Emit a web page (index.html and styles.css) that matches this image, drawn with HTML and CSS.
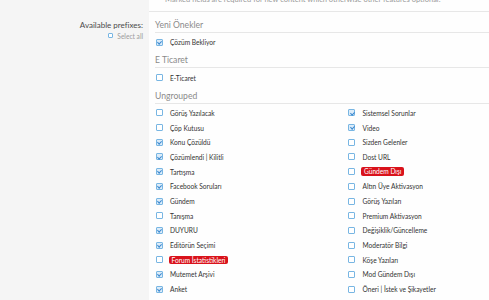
FILE: index.html
```html
<!DOCTYPE html>
<html lang="tr">
<head>
<meta charset="utf-8">
<title>Prefixes</title>
<link rel="stylesheet" href="styles.css">
</head>
<body>
<div class="page">
  <div class="form-row form-row--top">
    <div class="form-label"></div>
    <div class="form-field">
      <p class="hint">* Marked fields are required for new content which otherwise other features optional.</p>
    </div>
  </div>
  <div class="form-row">
    <div class="form-label">
      <div class="label-text">Available prefixes:</div>
      <label class="select-all"><span class="cb cb--small"></span>Select all</label>
    </div>
    <div class="form-field form-field--choices">
      <h3 class="group-head">Yeni Önekler</h3>
      <ul class="choices">
        <li class="choice"><span class="cb is-checked"></span><span class="txt">Çözüm Bekliyor</span></li>
      </ul>
      <h3 class="group-head">E Ticaret</h3>
      <ul class="choices">
        <li class="choice"><span class="cb"></span><span class="txt">E-Ticaret</span></li>
      </ul>
      <h3 class="group-head">Ungrouped</h3>
      <ul class="choices choices--grid">
        <li class="choice"><span class="cb"></span><span class="txt">Görüş Yazılacak</span></li>
        <li class="choice"><span class="cb is-checked"></span><span class="txt">Sistemsel Sorunlar</span></li>
        <li class="choice"><span class="cb"></span><span class="txt">Çöp Kutusu</span></li>
        <li class="choice"><span class="cb is-checked"></span><span class="txt">Video</span></li>
        <li class="choice"><span class="cb is-checked"></span><span class="txt">Konu Çözüldü</span></li>
        <li class="choice"><span class="cb"></span><span class="txt">Sizden Gelenler</span></li>
        <li class="choice"><span class="cb is-checked"></span><span class="txt">Çözümlendi | Kilitli</span></li>
        <li class="choice"><span class="cb"></span><span class="txt">Dost URL</span></li>
        <li class="choice"><span class="cb is-checked"></span><span class="txt">Tartışma</span></li>
        <li class="choice"><span class="cb"></span><span class="tag">Gündem Dışı</span></li>
        <li class="choice"><span class="cb is-checked"></span><span class="txt">Facebook Soruları</span></li>
        <li class="choice"><span class="cb"></span><span class="txt">Altın Üye Aktivasyon</span></li>
        <li class="choice"><span class="cb is-checked"></span><span class="txt">Gündem</span></li>
        <li class="choice"><span class="cb"></span><span class="txt">Görüş Yazıları</span></li>
        <li class="choice"><span class="cb"></span><span class="txt">Tanışma</span></li>
        <li class="choice"><span class="cb"></span><span class="txt">Premium Aktivasyon</span></li>
        <li class="choice"><span class="cb is-checked"></span><span class="txt">DUYURU</span></li>
        <li class="choice"><span class="cb"></span><span class="txt">Değişiklik/Güncelleme</span></li>
        <li class="choice"><span class="cb is-checked"></span><span class="txt">Editörün Seçimi</span></li>
        <li class="choice"><span class="cb"></span><span class="txt">Moderatör Bilgi</span></li>
        <li class="choice"><span class="cb"></span><span class="tag">Forum İstatistikleri</span></li>
        <li class="choice"><span class="cb"></span><span class="txt">Köşe Yazıları</span></li>
        <li class="choice"><span class="cb is-checked"></span><span class="txt">Mutemet Arşivi</span></li>
        <li class="choice"><span class="cb"></span><span class="txt">Mod Gündem Dışı</span></li>
        <li class="choice"><span class="cb is-checked"></span><span class="txt">Anket</span></li>
        <li class="choice"><span class="cb"></span><span class="txt">Öneri | İstek ve Şikayetler</span></li>
      </ul>
    </div>
  </div>
</div>
</body>
</html>
```
FILE: styles.css
```css
* { box-sizing: border-box; }
html, body { margin: 0; padding: 0; }
body {
  background: #f5f5f5;
  font-family: Lato, "Noto Sans", sans-serif;
  color: #333;
  overflow: hidden;
  height: 300px;
}
.page {
  margin-top: -5px;
}
.form-row {
  display: grid;
  grid-template-columns: 149px 1fr;
}
.form-label {
  background: #f5f5f5;
  padding: 7px 6px 0 0;
  text-align: right;
  font-size: 8px;
}
.form-field {
  background: #fefefe;
  padding-left: 6px;
}
.form-row--top .form-field {
  border-bottom: 1px solid #e7e7e7;
  height: 17px;
}
.hint {
  margin: 0;
  padding-left: 5px;
  font-size: 7.5px;
  line-height: 10px;
  color: #9a9a9a;
  white-space: nowrap;
  overflow: hidden;
}
.label-text {
  font-size: 8px;
  line-height: 12px;
  color: #4a4a4a;
}
.select-all {
  display: flex;
  justify-content: flex-end;
  align-items: center;
  gap: 4px;
  margin-top: 0.5px;
  font-size: 6.6px;
  line-height: 8px;
  color: #9c9c9c;
}
.form-field--choices {
  padding-top: 7px;
  padding-bottom: 20px;
}
.group-head {
  margin: 4.6px 0 0;
  padding: 0 0 1px;
  font-weight: normal;
  font-size: 8.6px;
  line-height: 12px;
  color: #8a8a8a;
  border-bottom: 1px solid #e7e7e7;
}
.group-head:first-child { margin-top: 0; }
.choices {
  list-style: none;
  margin: 0;
  padding: 2px 0 0 0.5px;
}
.choices--grid {
  display: grid;
  grid-template-columns: 192.5px 192.5px;
}
.choice {
  display: flex;
  align-items: center;
  height: 14.7px;
  font-size: 6.6px;
  white-space: nowrap;
}
.cb {
  position: relative;
  flex: none;
  width: 7px;
  height: 7px;
  border: 1px solid #78b6e3;
  border-radius: 1px;
  background: #fff;
  margin-right: 7.5px;
}
.cb.is-checked { background: #dcecf9; }
.cb.is-checked::after {
  content: "";
  position: absolute;
  left: 1.6px;
  top: 0.2px;
  width: 1.6px;
  height: 3.2px;
  border-right: 1px solid #3b88cf;
  border-bottom: 1px solid #3b88cf;
  transform: rotate(45deg);
}
.cb--small {
  width: 5.5px;
  height: 5.5px;
  margin-right: 0;
}
.txt { color: #333; }
.tag {
  display: inline-block;
  background: #d9121b;
  color: #fff;
  border-radius: 2px;
  padding: 0 3px;
  line-height: 8.5px;
  margin-left: -1.5px;
}
```
